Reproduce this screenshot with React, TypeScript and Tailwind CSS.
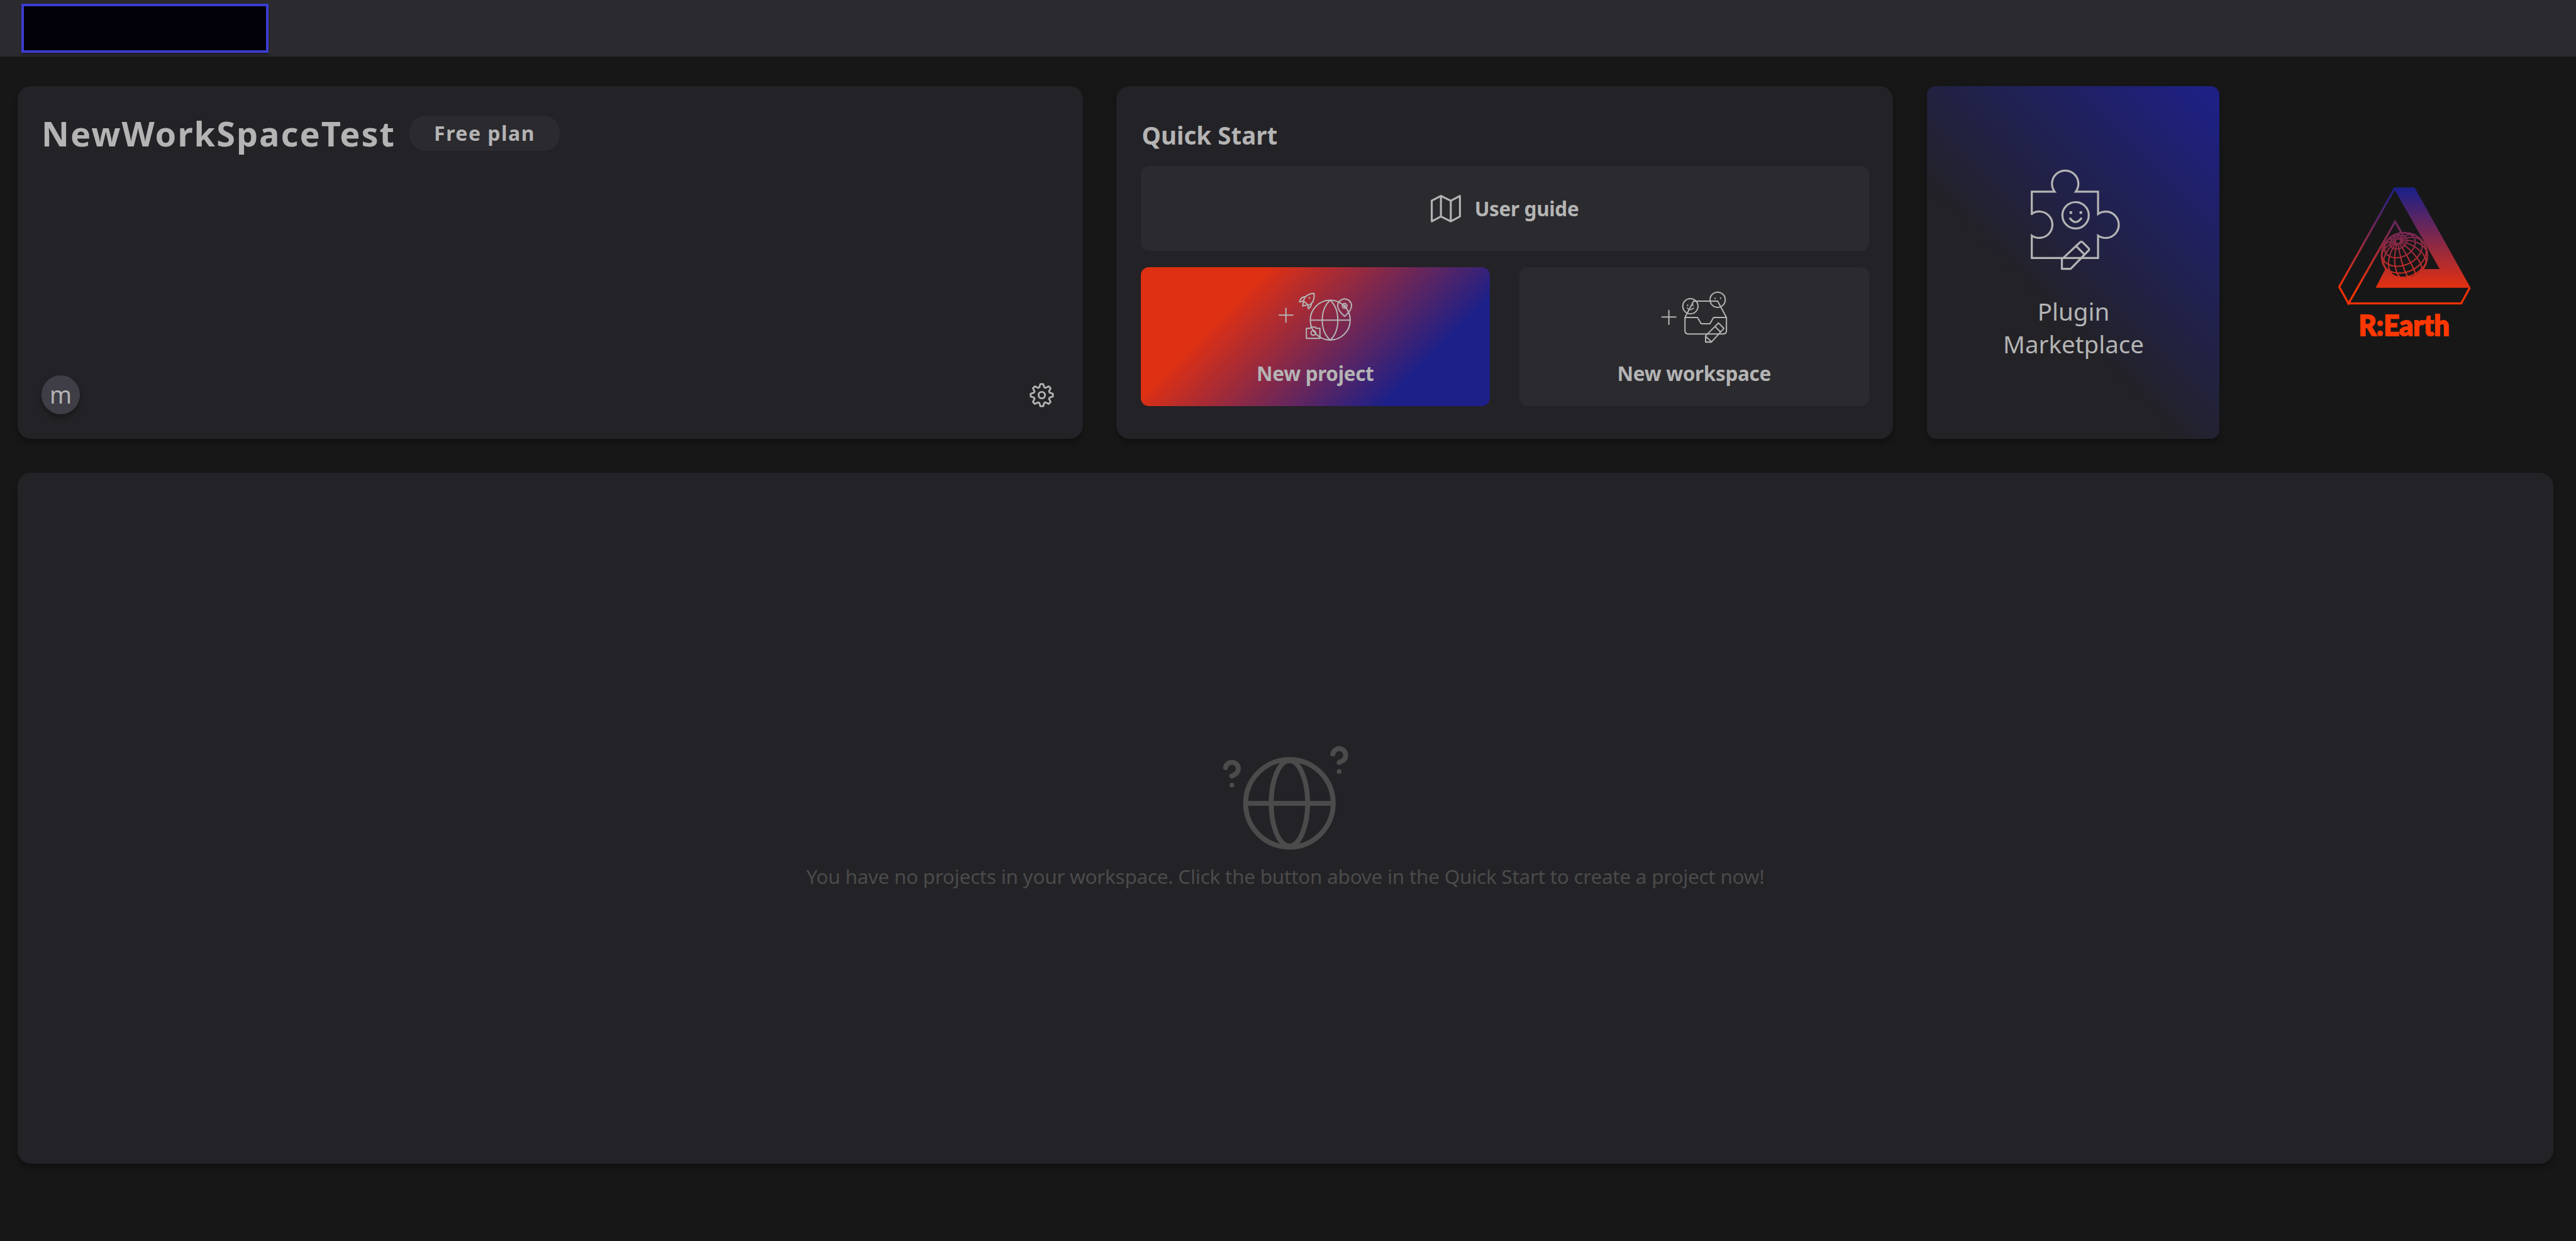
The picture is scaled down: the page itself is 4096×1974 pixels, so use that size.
import React from "react";

const LINE = "#b4b4b4";

const gearPath = (() => {
  const pts: string[] = [];
  for (let k = 0; k < 8; k++) {
    const a = (k * Math.PI) / 4 - Math.PI / 2;
    const put = (r: number, d: number) => {
      const t = a + (d * Math.PI) / 180;
      pts.push(`${(r * Math.cos(t)).toFixed(1)} ${(r * Math.sin(t)).toFixed(1)}`);
    };
    put(48, -18);
    put(66, -7);
    put(66, 7);
    put(48, 18);
  }
  return "M" + pts.join("L") + "Z";
})();

/* Orthographic graticule of a sphere whose pole leans toward the viewer. */
const graticule = (() => {
  const cx = 510, cy = 490, R = 134;
  const px = -38 / R, py = -85 / R;
  const pz = Math.sqrt(1 - px * px - py * py);
  const m = Math.hypot(px, pz);
  const u = [pz / m, 0, -px / m];
  const v = [py * u[2] - pz * u[1], pz * u[0] - px * u[2], px * u[1] - py * u[0]];
  const at = (th: number, ph: number) => {
    const s = Math.sin(th), c = Math.cos(th), a = Math.cos(ph), b = Math.sin(ph);
    return [
      px * c + s * (u[0] * a + v[0] * b),
      py * c + s * (u[1] * a + v[1] * b),
      pz * c + s * (u[2] * a + v[2] * b),
    ];
  };
  let d = "";
  const trace = (f: (t: number) => number[], n: number) => {
    let pen = false;
    for (let i = 0; i <= n; i++) {
      const p = f(i / n);
      if (p[2] < 0) { pen = false; continue; }
      d += `${pen ? "L" : "M"}${(cx + p[0] * R).toFixed(1)} ${(cy + p[1] * R).toFixed(1)}`;
      pen = true;
    }
  };
  for (let k = 1; k < 7; k++) trace((t) => at((k * Math.PI) / 8, t * 2 * Math.PI), 90);
  for (let k = 0; k < 16; k++) trace((t) => at(0.1 + t * 3, (k * Math.PI) / 8 + 0.1), 50);
  return d;
})();

function Gear() {
  return (
    <svg className="h-[41px] w-[41px]" viewBox="-76 -76 152 152" fill="none" stroke={LINE} strokeWidth="10.5" strokeLinejoin="round">
      <path d={gearPath} />
      <circle r="19" />
    </svg>
  );
}

function MapIcon() {
  return (
    <svg className="h-[44px] w-[48px]" viewBox="48 43 178 163" fill="none" stroke={LINE} strokeWidth="11.5" strokeLinejoin="round">
      <path d="M54 77L108 49L166 78L220 49V170L166 199L108 170L54 199Z" />
      <path d="M108 49V170M166 78V199" />
    </svg>
  );
}

function NewProjectIcon() {
  return (
    <svg className="h-[81px] w-[121px]" viewBox="220 100 450 300" fill="none" stroke={LINE} strokeWidth="7.5" strokeLinejoin="round">
      <path d="M228 242H315M271 198V286" />
      <circle cx="533" cy="271" r="118" />
      <path d="M415 271H651M533 153C470 210 470 332 533 389M533 153C593 210 593 332 533 389" />
      <path d="M618 249C590 225 577 208 577 187A41 41 0 0 1 659 187C659 208 646 225 618 249Z" />
      <circle cx="618" cy="187" r="14" />
      <circle cx="618" cy="187" r="4" />
      <path d="M392 320H414L420 312H444L450 320H472V379H392Z" />
      <circle cx="433" cy="347" r="14" />
      <path d="M437 113C405 113 380 130 375 158L403 183C430 176 440 148 437 113Z" />
      <path d="M386 133C368 133 355 145 351 164L375 158M375 158L370 188L394 182M421 167C424 182 418 194 404 204L400 182" />
      <circle cx="410" cy="140" r="3" strokeWidth="4" />
    </svg>
  );
}

function NewWorkspaceIcon() {
  return (
    <svg className="h-[84px] w-[108px]" viewBox="205 97 400 312" fill="none" stroke={LINE} strokeWidth="7.5" strokeLinejoin="round">
      <path d="M211 254H299M255 212V300" />
      <path d="M350 257H424L446 294H497L519 257H595V335Q595 354 577 354H368Q350 354 350 335ZM350 257L401 160H543L595 257" />
      <circle cx="382" cy="190" r="45" />
      <circle cx="543" cy="152" r="45" />
      <path d="M366 180V190M397 180V190M362 199Q382 222 403 199M528 140V150M560 138V148" strokeWidth="6" />
      <path d="M472 402V365L548 289L580 321L506 402ZM527 310L560 342M472 368L506 400" />
    </svg>
  );
}

function PluginIcon() {
  return (
    <svg className="ml-[7px] h-[162px] w-[143px]" viewBox="200 38 532 600" fill="none" stroke={LINE} strokeWidth="12">
      <path d="M210 308V170H345A78 78 0 1 1 470 170H602V302A78 78 0 1 1 602 430V563H210V430A78 78 0 1 0 206 304" />
      <circle cx="469" cy="310" r="78" />
      <path d="M434 325Q469 375 505 325" />
      <path d="M441 286V302M500 286V302" strokeWidth="15" />
      <path d="M388 627V570L495 470Q503 462 511 470L546 505Q552 511 546 518L440 627ZM472 492L520 540" strokeLinejoin="round" />
    </svg>
  );
}

function EmptyIcon() {
  return (
    <svg className="h-[168px] w-[202px]" viewBox="136 85 744 620" fill="none" stroke="#4b4b4b" strokeWidth="29">
      <circle cx="531" cy="424" r="257" />
      <ellipse cx="531" cy="424" rx="107" ry="250" />
      <path d="M274 424H788" />
      <g strokeLinecap="round">
        <path d="M156 214A38 38 0 1 1 212 254L193 264" />
        <path d="M786 134A38 38 0 1 1 842 174L823 184" />
      </g>
      <circle cx="193" cy="317" r="14" fill="#4b4b4b" stroke="none" />
      <circle cx="823" cy="237" r="14" fill="#4b4b4b" stroke="none" />
    </svg>
  );
}

function Logo() {
  return (
    <svg className="ml-[5px] h-[270px] w-[215px]" viewBox="112 80 798 1002">
      <defs>
        <linearGradient id="earth" gradientUnits="userSpaceOnUse" x1="0" y1="100" x2="0" y2="690">
          <stop offset="0" stopColor="#1d2088" />
          <stop offset="1" stopColor="#e8300d" />
        </linearGradient>
        <linearGradient id="edge" gradientUnits="userSpaceOnUse" x1="0" y1="100" x2="0" y2="690">
          <stop offset="0" stopColor="#1d2088" />
          <stop offset="1" stopColor="#f43205" />
        </linearGradient>
      </defs>
      <path fill="url(#earth)" d="M450 88H570L900 680H340L397 570H718L455 107Z" />
      <g fill="none" stroke="url(#edge)" strokeWidth="12">
        <path d="M453 92L125 675L180 773L455 290L499 366" />
        <path d="M172 773H845L895 680" />
      </g>
      <circle cx="510" cy="490" r="136" fill="#171718" />
      <g fill="none" stroke="url(#earth)" strokeWidth="8">
        <circle cx="510" cy="490" r="135" strokeWidth="10" />
        <path d={graticule} />
      </g>
      <text x="240" y="963" textLength="536" lengthAdjust="spacingAndGlyphs" fill="#ff3700" stroke="#ff3700" strokeWidth="7" className="font-['Lato'] text-[168px] font-black">
        R:Earth
      </text>
    </svg>
  );
}

const card = "bg-[#232226] shadow-[0_6px_9px_rgba(0,0,0,0.3)]";

export default function App() {
  return (
    <div className="flex h-[1974px] w-[4096px] flex-col overflow-hidden bg-[#171718] font-['Noto_Sans',sans-serif] text-[#b4b4b4]">
      <header className="flex h-[90px] shrink-0 bg-[#2b2a2f] pt-[6px] pl-[34px]">
        <div className="h-[78px] w-[393px] border-4 border-[#3b3cd0] bg-[#020109] shadow-[0_4px_3px_rgba(0,0,0,0.25)]" />
      </header>

      <main className="flex flex-col gap-[53.5px] pt-[47px] pr-[36.5px] pl-[28px]">
        <div className="flex h-[561px] gap-[53.5px]">
          <section className={`flex w-[1693.5px] flex-col justify-between rounded-[21px] pt-[37.5px] pr-[45px] pb-[39px] pl-[38px] ${card}`}>
            <div className="flex items-center gap-[22px]">
              <h1 className="text-[54px] leading-[75px] font-bold tracking-[2.05px] whitespace-nowrap">NewWorkSpaceTest</h1>
              <span className="flex h-[56px] w-[239px] items-center justify-center rounded-[25px] bg-[#2b2a2f] text-[32px] font-bold tracking-[1.5px] whitespace-nowrap">
                Free plan
              </span>
            </div>
            <div className="flex items-center justify-between">
              <span className="flex h-[62px] w-[61px] items-center justify-center rounded-full bg-[#3f3d45] text-[37.5px] leading-none shadow-[0_6px_9px_rgba(0,0,0,0.3)]">
                m
              </span>
              <Gear />
            </div>
          </section>

          <section className={`flex w-[1235px] flex-col rounded-[21px] px-[38.5px] pt-[48px] ${card}`}>
            <h2 className="h-[79px] pl-[2px] text-[38.5px] leading-[60px] font-bold">Quick Start</h2>
            <div className="flex h-[135px] items-center justify-center gap-[22px] rounded-[13px] bg-[#2b2a2f]">
              <MapIcon />
              <span className="text-[31.5px] font-bold tracking-[-0.35px]">User guide</span>
            </div>
            <div className="mt-[26px] flex h-[221px] gap-[47px]">
              <div className="flex flex-1 flex-col items-center justify-between rounded-[13px] bg-[linear-gradient(135deg,#df3013_26%,#1d2088_78%)] pt-[38px] pb-[30px]">
                <NewProjectIcon />
                <span className="text-[31.5px] leading-[44px] font-bold tracking-[-0.35px]">New project</span>
              </div>
              <div className="flex flex-1 flex-col items-center justify-between rounded-[13px] bg-[#2b2a2f] pt-[37px] pb-[30px]">
                <NewWorkspaceIcon />
                <span className="text-[31.5px] leading-[44px] font-bold tracking-[-0.35px]">New workspace</span>
              </div>
            </div>
          </section>

          <section className="flex w-[465px] flex-col items-center rounded-[14px] bg-[linear-gradient(225deg,#1e2084_3%,#232226_62%)] pt-[132px] shadow-[0_6px_9px_rgba(0,0,0,0.3)]">
            <PluginIcon />
            <p className="mt-[37.5px] ml-[2px] text-center text-[38.5px] leading-[52px]">
              Plugin
              <br />
              Marketplace
            </p>
          </section>

          <div className="flex flex-1 justify-center pt-[159px]">
            <Logo />
          </div>
        </div>

        <section className={`flex h-[1099.5px] flex-col items-center rounded-[21px] pt-[434px] ${card}`}>
          <EmptyIcon />
          <p className="mt-[18px] text-[31.5px] leading-[44px] tracking-[-0.27px] whitespace-nowrap text-[#4b4b4b]">
            You have no projects in your workspace. Click the button above in the Quick Start to create a project now!
          </p>
        </section>
      </main>
    </div>
  );
}
